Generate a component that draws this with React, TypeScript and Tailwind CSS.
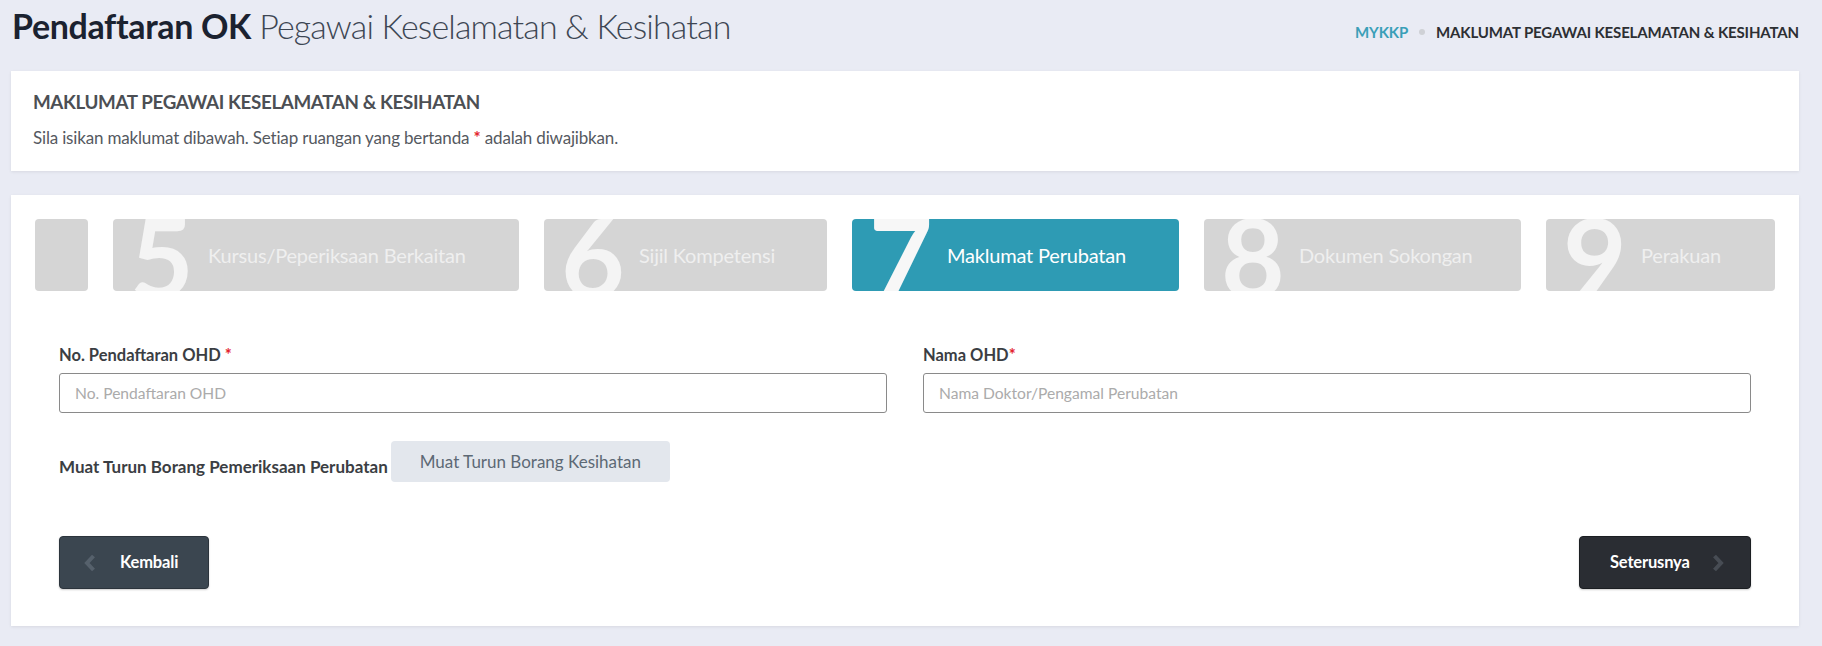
import React from 'react';

const steps = [
  { num: '4', label: '', width: 'w-[53px]', active: false },
  { num: '5', label: 'Kursus/Peperiksaan Berkaitan', width: 'w-[406px]', active: false },
  { num: '6', label: 'Sijil Kompetensi', width: 'w-[283px]', active: false },
  { num: '7', label: 'Maklumat Perubatan', width: 'w-[327px]', active: true },
  { num: '8', label: 'Dokumen Sokongan', width: 'w-[317px]', active: false },
  { num: '9', label: 'Perakuan', width: 'w-[229px]', active: false },
];

const Chevron = ({ dir, className }: { dir: 'left' | 'right'; className?: string }) => (
  <svg width="12" height="18" viewBox="0 0 12 18" className={className} fill="none">
    <path
      d={dir === 'left' ? 'M9.5 2 L3 9 L9.5 16' : 'M2.5 2 L9 9 L2.5 16'}
      stroke="currentColor"
      strokeWidth="4"
      strokeLinejoin="miter"
    />
  </svg>
);

const App = () => {
  return (
    <div className="min-h-screen bg-[#e9ebf4] pl-[11px] pr-[23px] font-['Lato','Liberation_Sans',sans-serif]">
      {/* Page header */}
      <div className="flex h-[71px] items-start justify-between">
        <h1 className="pl-[1px] pt-[6px] text-[34px] leading-[40px] tracking-[-0.02em]">
          <span className="font-bold tracking-[-0.01em] text-[#1b2230]">Pendaftaran OK</span>{' '}
          <span className="font-light tracking-[-0.025em] text-[#3d4653]">Pegawai Keselamatan &amp; Kesihatan</span>
        </h1>
        <div className="flex items-center pt-[22px] text-[15px] font-bold uppercase leading-[20px] tracking-[-0.01em]">
          <span className="text-[#3a9fb8]">MYKKP</span>
          <span className="mx-[11px] h-[6px] w-[6px] rounded-full bg-[#cfd1d6]" />
          <span className="text-[#2d2f33]">Maklumat Pegawai Keselamatan &amp; Kesihatan</span>
        </div>
      </div>

      {/* Info card */}
      <div className="h-[100px] bg-white pl-[22px] pt-[19px] shadow-[0_1px_3px_rgba(0,0,0,0.08)]">
        <h2 className="text-[18.8px] font-bold uppercase leading-[24px] tracking-[-0.02em] text-[#4c4f54]">
          Maklumat Pegawai Keselamatan &amp; Kesihatan
        </h2>
        <p className="mt-[13px] text-[17px] leading-[22px] tracking-[-0.01em] text-[#55595f]">
          Sila isikan maklumat dibawah. Setiap ruangan yang bertanda{' '}
          <span className="font-bold text-[#e3232d]">*</span> adalah diwajibkan.
        </p>
      </div>

      {/* Wizard card */}
      <div className="mt-[24px] bg-white px-[24px] pb-[37px] pt-[24px] shadow-[0_1px_3px_rgba(0,0,0,0.08)]">
        <div className="flex gap-[25px] overflow-hidden">
          {steps.map((s) => (
            <div
              key={s.num}
              className={`${s.width} flex h-[72px] shrink-0 items-center overflow-hidden rounded-[4px] pl-[17px] ${
                s.active ? 'bg-[#2e9bb4]' : 'bg-[#d5d5d5]'
              }`}
            >
              {s.label && (
                <>
                  <span
                    aria-hidden="true"
                    className={`w-[60px] shrink-0 select-none text-[110px] font-bold leading-none ${
                      s.active ? 'text-[#f7f7f7]' : 'text-[#f4f4f4]'
                    }`}
                  >
                    {s.num}
                  </span>
                  <span
                    className={`ml-[18px] whitespace-nowrap text-[20px] tracking-[-0.01em] ${
                      s.active ? 'text-white' : 'text-[#efefef]'
                    }`}
                  >
                    {s.label}
                  </span>
                </>
              )}
            </div>
          ))}
        </div>

        <div className="px-[24px]">
          {/* Inputs */}
          <div className="mt-[53px] grid grid-cols-2 gap-[36px]">
            <div>
              <label className="block text-[16.5px] font-bold leading-[22px] text-[#3b3e43]">
                No. Pendaftaran OHD <span className="text-[#e3232d]">*</span>
              </label>
              <input
                className="mt-[7px] h-[40px] w-full rounded-[3px] border border-[#8a8a8a] px-[15px] text-[15.6px] outline-none placeholder:text-[#ababab]"
                placeholder="No. Pendaftaran OHD"
              />
            </div>
            <div>
              <label className="block text-[16.5px] font-bold leading-[22px] text-[#3b3e43]">
                Nama OHD<span className="text-[#e3232d]">*</span>
              </label>
              <input
                className="mt-[7px] h-[40px] w-full rounded-[3px] border border-[#8a8a8a] px-[15px] text-[15.6px] outline-none placeholder:text-[#ababab]"
                placeholder="Nama Doktor/Pengamal Perubatan"
              />
            </div>
          </div>

          {/* Download form */}
          <div className="mt-[28px] flex items-center gap-[3px]">
            <span className="mt-[10px] text-[17px] font-bold leading-[22px] text-[#3b3e43]">
              Muat Turun Borang Pemeriksaan Perubatan
            </span>
            <button className="h-[41px] rounded-[4px] bg-[#e3e7ed] px-[29px] text-[17px] text-[#5d6975]">
              Muat Turun Borang Kesihatan
            </button>
          </div>

          {/* Navigation */}
          <div className="mt-[54px] flex items-center justify-between">
            <button className="flex h-[53px] w-[150px] items-center rounded-[4px] border border-[#2c343c] bg-[#3b4650] pl-[24px] shadow-[0_1px_2px_rgba(0,0,0,0.2)]">
              <Chevron dir="left" className="text-[#56616c]" />
              <span className="ml-[24px] text-[16.5px] font-bold tracking-[-0.01em] text-white">Kembali</span>
            </button>
            <button className="flex h-[53px] w-[172px] items-center rounded-[4px] border border-[#1b1e22] bg-[#2a2d33] pl-[30px] shadow-[0_1px_2px_rgba(0,0,0,0.2)]">
              <span className="text-[16.5px] font-bold tracking-[-0.01em] text-white">Seterusnya</span>
              <Chevron dir="right" className="ml-[22px] text-[#474c54]" />
            </button>
          </div>
        </div>
      </div>
    </div>
  );
};

export default App;
